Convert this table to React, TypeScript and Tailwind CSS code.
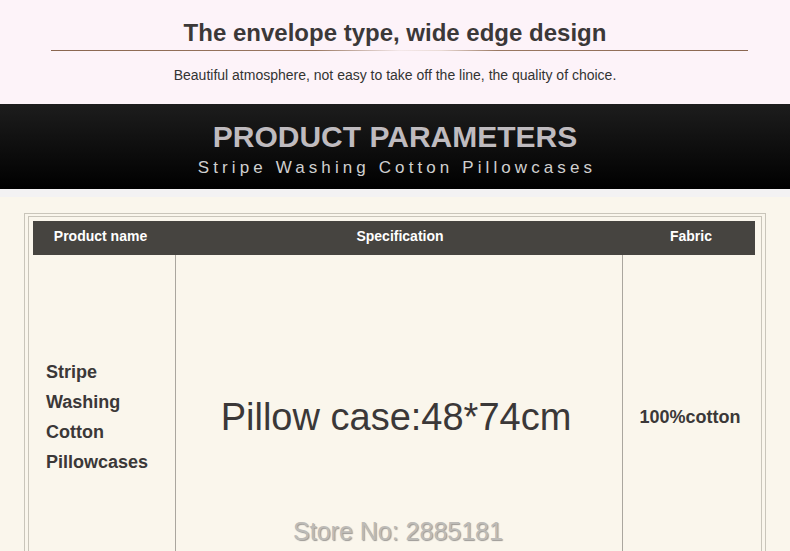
import React from "react";

const arial = { fontFamily: '"Liberation Sans", Arial, sans-serif' };

export default function App() {
  return (
    <div className="w-[790px] h-[551px] overflow-hidden bg-[#faf6ec]" style={arial}>
      {/* Top pink header */}
      <div className="h-[104px] bg-[#fdf3f9] flex flex-col items-center">
        <div className="mt-[19px] text-[24px] leading-[28px] font-bold text-[#3b3838]">
          The envelope type, wide edge design
        </div>
        <div className="mt-[3px] ml-[9px] w-[697px] h-[1px] bg-[linear-gradient(to_right,#8a6650_0%,#9a7862_38%,#f4e8ea_50%,#eadbd6_56%,#9a7862_64%,#8a6650_100%)]" />
        <div className="mt-[16px] text-[14px] leading-[16px] text-[#333]">
          Beautiful atmosphere, not easy to take off the line, the quality of choice.
        </div>
      </div>

      {/* Dark band */}
      <div className="h-[85px] bg-[linear-gradient(to_bottom,#1d1d1d,#000000)] flex flex-col items-center">
        <div className="mt-[16px] text-[30px] leading-[34px] font-bold text-[#bfbbbf]">
          PRODUCT PARAMETERS
        </div>
        <div className="mt-[4px] ml-[4px] text-[17px] leading-[20px] tracking-[4.1px] text-[#d0d0d0]">
          Stripe Washing Cotton Pillowcases
        </div>
      </div>

      {/* light strip */}
      <div className="h-[8px] bg-[#f3f2f3]" />

      {/* Cream section */}
      <div className="relative pt-[16px] px-[24px]">
        <div className="border border-[#c9c5ba] pt-[2px] px-[3px]">
          <div className="border border-[#c9c5ba] h-[400px] flex flex-col">
            <div className="mt-[4px] ml-[4px] mr-[6px] h-[34px] pb-[3px] bg-[#464440] grid grid-cols-[135px_464px_1fr] items-center text-white text-[14px] font-bold">
              <div className="text-center">Product name</div>
              <div className="text-center">Specification</div>
              <div className="text-center pr-[5px]">Fabric</div>
            </div>
            <div className="grid grid-cols-[147px_447px_1fr] h-[324px]">
              <div className="border-r border-[#aaa69e] flex flex-col justify-center pl-[17px] text-[18px] leading-[30px] font-bold text-[#3b3838]">
                <div>Stripe</div>
                <div>Washing</div>
                <div>Cotton</div>
                <div>Pillowcases</div>
              </div>
              <div className="border-r border-[#aaa69e] flex items-center justify-center pr-[6px] text-[38px] leading-[44px] text-[#3b3838]">
                Pillow case:48*74cm
              </div>
              <div className="flex items-center justify-center pr-[4px] text-[18px] font-bold text-[#3b3838]">
                100%cotton
              </div>
            </div>
          </div>
        </div>
        <div className="absolute left-[6px] right-0 top-[319px] text-center text-[25px] leading-[30px] text-[#bdbbb7] [text-shadow:1px_1px_1px_#9c9a96]">
          Store No: 2885181
        </div>
      </div>
    </div>
  );
}
